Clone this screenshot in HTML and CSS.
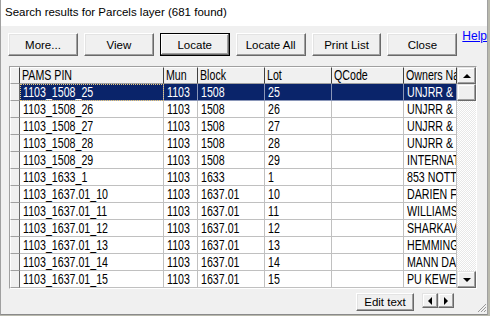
FILE: index.html
```html
<!DOCTYPE html>
<html lang="en">
<head>
    <meta charset="UTF-8">
    <title>Search results for Parcels layer</title>
    <link rel="stylesheet" href="styles.css">
</head>
<body>
    <div class="window">
        <div class="title">Search results for Parcels layer (681 found)</div>

        <div class="toolbar">
            <button class="btn">More...</button>
            <button class="btn">View</button>
            <button class="btn default">Locate</button>
            <button class="btn">Locate All</button>
            <button class="btn">Print List</button>
            <button class="btn">Close</button>
            <a class="help" href="#">Help</a>
        </div>

        <div class="grid-wrap">
            <div class="grid" id="grid">
                <div class="row head">
                    <div class="cell ind"></div>
                    <div class="cell"><span class="t">PAMS PIN</span></div>
                    <div class="cell"><span class="t">Mun</span></div>
                    <div class="cell"><span class="t">Block</span></div>
                    <div class="cell"><span class="t">Lot</span></div>
                    <div class="cell"><span class="t">QCode</span></div>
                    <div class="cell"><span class="t">Owners Na</span></div>
                </div>
            </div>
            <div class="vscroll">
                <div class="sbtn"><span class="tri up"></span></div>
                <div class="thumb"></div>
                <div class="track"></div>
                <div class="sbtn"><span class="tri down"></span></div>
            </div>
        </div>

        <div class="bottom">
            <button class="btn small">Edit text</button>
            <div class="arrows">
                <div class="abtn"><span class="tri left"></span></div>
                <div class="abtn"><span class="tri right"></span></div>
            </div>
            <svg class="grip" width="10" height="10" viewBox="0 0 10 10">
                <path d="M9 1 L1 9 M9 4 L4 9 M9 7 L7 9" stroke="#9a9a9a" stroke-width="1"/>
            </svg>
        </div>
    </div>

    <script>
        const rows = [
            ['1103_1508_25', '1103', '1508', '25', '', 'UNJRR &'],
            ['1103_1508_26', '1103', '1508', '26', '', 'UNJRR &'],
            ['1103_1508_27', '1103', '1508', '27', '', 'UNJRR &'],
            ['1103_1508_28', '1103', '1508', '28', '', 'UNJRR &'],
            ['1103_1508_29', '1103', '1508', '29', '', 'INTERNAT'],
            ['1103_1633_1', '1103', '1633', '1', '', '853 NOTT'],
            ['1103_1637.01_10', '1103', '1637.01', '10', '', 'DARIEN F'],
            ['1103_1637.01_11', '1103', '1637.01', '11', '', 'WILLIAMS'],
            ['1103_1637.01_12', '1103', '1637.01', '12', '', 'SHARKAV'],
            ['1103_1637.01_13', '1103', '1637.01', '13', '', 'HEMMING'],
            ['1103_1637.01_14', '1103', '1637.01', '14', '', 'MANN DA'],
            ['1103_1637.01_15', '1103', '1637.01', '15', '', 'PU KEWE']
        ];

        const grid = document.getElementById('grid');
        rows.forEach((r, i) => {
            const row = document.createElement('div');
            row.className = i === 0 ? 'row selected' : 'row';
            row.innerHTML = `
                <div class="cell ind"></div>
                <div class="cell pin"><span class="t">${r[0]}</span></div>
                <div class="cell"><span class="t">${r[1]}</span></div>
                <div class="cell"><span class="t">${r[2]}</span></div>
                <div class="cell"><span class="t">${r[3]}</span></div>
                <div class="cell"><span class="t">${r[4]}</span></div>
                <div class="cell"><span class="t">${r[5].replace('&', '&amp;')}</span></div>
            `;
            grid.appendChild(row);
        });
    </script>
</body>
</html>
```

FILE: styles.css
```css
body {
    margin: 0;
    background: #b9b9ad;
    font-family: "Liberation Sans", Arial, sans-serif;
}

.window {
    width: 486px;
    height: 314px;
    background: #f0f0f0;
    border-left: 1px solid #a0a0a0;
    border-right: 1px solid #a0a0a0;
    border-bottom: 1px solid #8a8a8a;
    display: flex;
    flex-direction: column;
}

.title {
    height: 26px;
    background: #fff;
    padding-left: 4px;
    font-size: 11.5px;
    line-height: 25px;
    color: #000;
    white-space: nowrap;
}

/* button row */
.toolbar {
    display: flex;
    align-items: flex-start;
    gap: 6px;
    margin-top: 7px;
    padding-left: 7px;
}

.btn {
    box-sizing: border-box;
    width: 70px;
    height: 23px;
    padding: 0;
    background: #f0f0f0;
    font-family: "Liberation Sans", Arial, sans-serif;
    font-size: 11.5px;
    color: #000;
    border: 1px solid;
    border-color: #fff #696969 #696969 #fff;
    box-shadow: inset -1px -1px #a0a0a0, inset 1px 1px #e3e3e3;
}

.btn.default {
    border-color: #000;
    box-shadow: inset -1px -1px #696969, inset 1px 1px #fff, inset -2px -2px #a0a0a0;
}

.help {
    margin-top: -4px;
    margin-left: -1px;
    font-size: 12px;
    line-height: 14px;
    color: #0000ff;
    text-decoration: underline;
}

/* grid */
.grid-wrap {
    display: flex;
    width: 466px;
    height: 221px;
    margin-top: 10px;
    margin-left: 8px;
    border: 1px solid;
    border-color: #a0a0a0 #fff #fff #a0a0a0;
}

.grid {
    width: 447px;
    overflow: hidden;
    background: #f0f0f0;
    font-family: "Liberation Sans", Arial, sans-serif;
    font-size: 14px;
}

.row {
    display: grid;
    grid-template-columns: 10px 144px 34px 67px 67px 72px 53px;
    height: 17px;
    background: #fff;
}

.cell {
    box-sizing: border-box;
    height: 17px;
    padding-left: 3px;
    line-height: 17px;
    white-space: nowrap;
    overflow: hidden;
    border-right: 1px solid #c0c0c0;
    border-bottom: 1px solid #c0c0c0;
    color: #000;
}

/* narrow face: squeeze the regular sans */
.t {
    display: inline-block;
    transform: scaleX(0.76);
    transform-origin: left center;
}

.cell.ind {
    background: #f0f0f0;
    padding: 0;
    border-left: 1px solid #fff;
    border-right: 1px solid #696969;
    border-bottom-color: #a0a0a0;
}

.row.head .cell {
    background: #f0f0f0;
    padding-left: 2px;
    border-top: 1px solid #fff;
    border-right-color: #404040;
    border-bottom-color: #a0a0a0;
    line-height: 15px;
}

.row.head .cell.ind {
    padding: 0;
}

.row.selected .cell {
    background: #0a246a;
    color: #fff;
    border-right-color: #8a96b8;
    border-bottom-color: #8a96b8;
}

.row.selected .cell.ind {
    background: #f0f0f0;
    border-right-color: #696969;
    border-bottom-color: #a0a0a0;
}

.row.selected .cell.pin {
    outline: 1px dotted #e8c878;
    outline-offset: -1px;
}

/* vertical scrollbar */
.vscroll {
    width: 19px;
    display: flex;
    flex-direction: column;
}

.sbtn,
.thumb,
.abtn {
    box-sizing: border-box;
    background: #f0f0f0;
    border: 1px solid;
    border-color: #e3e3e3 #696969 #696969 #e3e3e3;
    box-shadow: inset -1px -1px #a0a0a0, inset 1px 1px #fff;
    display: flex;
    align-items: center;
    justify-content: center;
}

.sbtn {
    height: 17px;
}

.thumb {
    height: 17px;
}

.track {
    flex: 1;
    background-color: #fff;
    background-image: repeating-conic-gradient(#e8e8e8 0 25%, #fff 0 50%);
    background-size: 2px 2px;
}

.tri {
    width: 0;
    height: 0;
    border: 4px solid transparent;
}

.tri.up {
    border-bottom-color: #000;
    border-top-width: 0;
}

.tri.down {
    border-top-color: #000;
    border-bottom-width: 0;
}

.tri.left {
    border-right-color: #000;
    border-left-width: 0;
}

.tri.right {
    border-left-color: #000;
    border-right-width: 0;
}

/* bottom strip */
.bottom {
    flex: 1;
    display: flex;
    align-items: flex-start;
    padding-top: 4px;
    padding-left: 355px;
}

.btn.small {
    width: 58px;
    height: 18px;
}

.arrows {
    display: flex;
    margin-left: 8px;
}

.abtn {
    width: 16px;
    height: 15px;
}

.grip {
    align-self: flex-end;
    margin-left: auto;
    margin-bottom: 1px;
}
```
